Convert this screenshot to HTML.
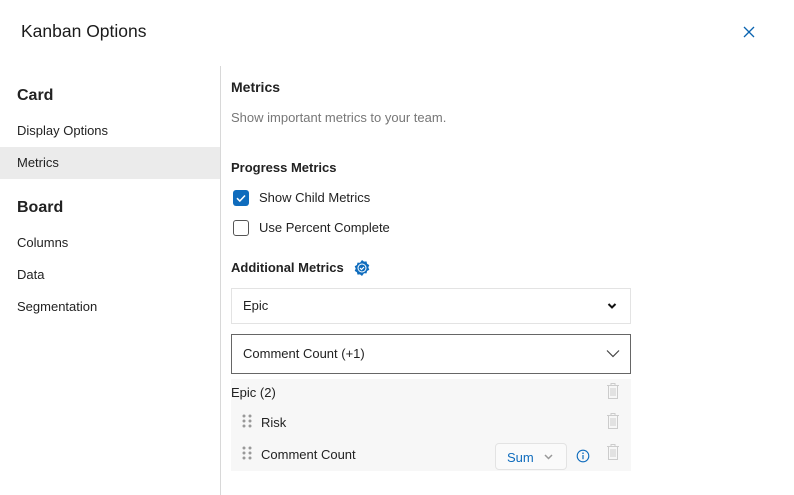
<!DOCTYPE html>
<html><head><style>
*{margin:0;padding:0;box-sizing:border-box}
body{width:794px;height:495px;background:#fff;font-family:"Liberation Sans",sans-serif;color:#222;position:relative;overflow:hidden;font-size:13px}
.a{position:absolute;white-space:nowrap}
</style></head><body>
<div class="a" style="left:21px;top:21px;font-size:17.5px;color:#1b1b1b">Kanban Options</div>
<svg class="a" style="left:743px;top:26px" width="12" height="12" viewBox="0 0 12 12"><path d="M1 1L11 11M11 1L1 11" stroke="#0a63b0" stroke-width="1.3"/></svg>
<div class="a" style="left:220px;top:66px;width:1px;height:429px;background:#d8d8d8"></div>
<div class="a" style="left:17px;top:87px;font-size:16px;font-weight:bold;color:#222">Card</div>
<div class="a" style="left:17px;top:123px">Display Options</div>
<div class="a" style="left:0;top:147px;width:220px;height:32px;background:#ebebeb"></div>
<div class="a" style="left:17px;top:155px">Metrics</div>
<div class="a" style="left:17px;top:199px;font-size:16px;font-weight:bold">Board</div>
<div class="a" style="left:17px;top:235px">Columns</div>
<div class="a" style="left:17px;top:267px">Data</div>
<div class="a" style="left:17px;top:299px">Segmentation</div>

<div class="a" style="left:231px;top:79px;font-size:14px;font-weight:bold;color:#222">Metrics</div>
<div class="a" style="left:231px;top:110px;color:#777">Show important metrics to your team.</div>
<div class="a" style="left:231px;top:160px;font-weight:bold">Progress Metrics</div>
<div class="a" style="left:233px;top:190px;width:16px;height:16px;background:#0f6cbd;border-radius:3px"></div>
<svg class="a" style="left:233px;top:190px" width="16" height="16"><path d="M4 8.2L6.8 11L12 5.5" stroke="#fff" stroke-width="1.5" fill="none"/></svg>
<div class="a" style="left:259px;top:190px">Show Child Metrics</div>
<div class="a" style="left:233px;top:220px;width:16px;height:16px;border:1px solid #555;border-radius:3px"></div>
<div class="a" style="left:259px;top:220px">Use Percent Complete</div>
<div class="a" style="left:231px;top:260px;font-weight:bold">Additional Metrics</div>
<svg class="a" style="left:353px;top:259px" width="18" height="18" viewBox="0 0 18 18"><path d="M9 1l2 1.6 2.5-.2.6 2.4 2.2 1.3-1 2.3 1 2.3-2.2 1.3-.6 2.4-2.5-.2L9 17l-2-1.6-2.5.2-.6-2.4L1.7 11.9l1-2.3-1-2.3 2.2-1.3.6-2.4 2.5.2z" fill="#0f6cbd"/><circle cx="9" cy="9" r="4.5" fill="#fff"/><circle cx="9" cy="9" r="3.5" fill="#0f6cbd"/><path d="M7 9l1.5 1.5L11 8" stroke="#fff" stroke-width="1.2" fill="none"/></svg>

<div class="a" style="left:231px;top:288px;width:400px;height:36px;border:1px solid #e3e3e3"></div>
<div class="a" style="left:243px;top:298px">Epic</div>
<svg class="a" style="left:607px;top:302px" width="10" height="8"><path d="M1.5 2l3.5 3.5L8.5 2" stroke="#111" stroke-width="2" fill="none"/></svg>
<div class="a" style="left:231px;top:334px;width:400px;height:40px;border:1px solid #666"></div>
<div class="a" style="left:243px;top:346px">Comment Count (+1)</div>
<svg class="a" style="left:606px;top:349px" width="14" height="9"><path d="M1 1.5l6 6 6-6" stroke="#444" stroke-width="1.2" fill="none"/></svg>

<div class="a" style="left:231px;top:379px;width:400px;height:92px;background:#f7f7f7"></div>
<div class="a" style="left:231px;top:385px">Epic (2)</div>
<div class="a" style="left:261px;top:415px">Risk</div>
<div class="a" style="left:261px;top:447px">Comment Count</div>
<svg class="a" style="left:241px;top:413px" width="12" height="16"><g fill="#999"><circle cx="3" cy="3" r="1.5"/><circle cx="9" cy="3" r="1.5"/><circle cx="3" cy="8" r="1.5"/><circle cx="9" cy="8" r="1.5"/><circle cx="3" cy="13" r="1.5"/><circle cx="9" cy="13" r="1.5"/></g></svg>
<svg class="a" style="left:241px;top:445px" width="12" height="16"><g fill="#999"><circle cx="3" cy="3" r="1.5"/><circle cx="9" cy="3" r="1.5"/><circle cx="3" cy="8" r="1.5"/><circle cx="9" cy="8" r="1.5"/><circle cx="3" cy="13" r="1.5"/><circle cx="9" cy="13" r="1.5"/></g></svg>
<div class="a" style="left:495px;top:443px;width:72px;height:27px;border:1px solid #e3e3e3;border-radius:4px;background:#fafafa"></div>
<div class="a" style="left:507px;top:450px;color:#0f6cbd">Sum</div>
<svg class="a" style="left:544px;top:454px" width="9" height="6"><path d="M1 1l3.5 3.5L8 1" stroke="#999" stroke-width="1.5" fill="none"/></svg>
<svg class="a" style="left:576px;top:449px" width="14" height="14"><circle cx="7" cy="7" r="5.8" stroke="#0f6cbd" fill="none" stroke-width="1.1"/><path d="M7 6v4.2" stroke="#0f6cbd" stroke-width="1.2"/><circle cx="7" cy="4.2" r=".8" fill="#0f6cbd"/></svg>
<svg class="a" style="left:606px;top:382px" width="14" height="18"><g stroke="#ccc" fill="none" stroke-width="1"><path d="M1 3.5h12M5 3.5V1.5h4v2"/><rect x="2.5" y="3.5" width="9" height="13"/><path d="M5 6v8M7 6v8M9 6v8"/></g></svg>
<svg class="a" style="left:606px;top:412px" width="14" height="18"><g stroke="#ccc" fill="none" stroke-width="1"><path d="M1 3.5h12M5 3.5V1.5h4v2"/><rect x="2.5" y="3.5" width="9" height="13"/><path d="M5 6v8M7 6v8M9 6v8"/></g></svg>
<svg class="a" style="left:606px;top:443px" width="14" height="18"><g stroke="#ccc" fill="none" stroke-width="1"><path d="M1 3.5h12M5 3.5V1.5h4v2"/><rect x="2.5" y="3.5" width="9" height="13"/><path d="M5 6v8M7 6v8M9 6v8"/></g></svg>
</body></html>
